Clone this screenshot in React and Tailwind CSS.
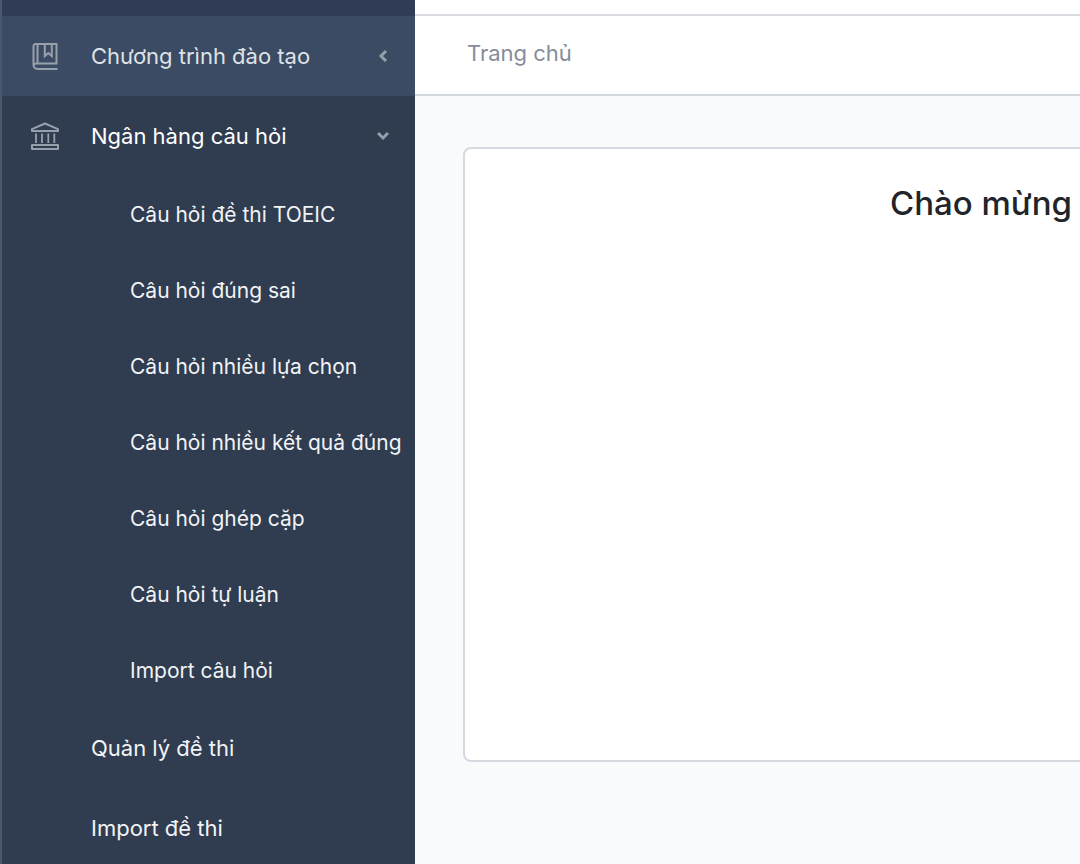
import React, { useState } from "react";

const BookIcon = () => (
  <svg className="w-7 h-7" viewBox="0 0 28 28" fill="none" stroke="currentColor" strokeWidth="2" aria-hidden="true">
    <path d="M26.500 27H6.500a4 4 0 0 1-4-4V4a2 2 0 0 1 2-2h21v19.500H5.500a2.800 2.800 0 0 0-2.800 1.500" />
    <path d="M6.500 2v19.500M13.800 2v12l3.500-3 3.500 3V2" />
  </svg>
);

const BankIcon = () => (
  <svg className="w-7 h-7" viewBox="0 0 28 28" fill="none" stroke="currentColor" strokeWidth="2" strokeLinejoin="round" aria-hidden="true">
    <path d="M1 9V7.200L14 1.500l13 5.700V9z" />
    <path d="M5 11.500v9.500M11 11.500v9.500M17.300 11.500v9.500M23.300 11.500v9.500" strokeWidth="1.8" />
    <path d="M1 23h26v4H1z" />
  </svg>
);

const Arrow = ({ open }) => (
  <svg
    className={`w-3 h-3 text-[#969eaa] ${open ? "" : "rotate-90"}`}
    viewBox="0 0 12 12"
    fill="none"
    stroke="currentColor"
    strokeWidth="3"
    aria-hidden="true"
  >
    <path d="M1 3l5 5 5-5" />
  </svg>
);

const menu = [
  { id: "program", label: "Chương trình đào tạo", icon: BookIcon, children: [] },
  {
    id: "questions",
    label: "Ngân hàng câu hỏi",
    icon: BankIcon,
    children: [
      "Câu hỏi đề thi TOEIC",
      "Câu hỏi đúng sai",
      "Câu hỏi nhiều lựa chọn",
      "Câu hỏi nhiều kết quả đúng",
      "Câu hỏi ghép cặp",
      "Câu hỏi tự luận",
      "Import câu hỏi",
    ],
  },
];

const links = ["Quản lý đề thi", "Import đề thi"];

function Sidebar() {
  const [openId, setOpenId] = useState("questions");

  return (
    <nav className="w-[415px] shrink-0 bg-[#303c50] border-l-2 border-[#4b586a] text-[22px] whitespace-nowrap">
      <div className="h-4 bg-[#303c56]" />
      {menu.map(({ id, label, icon: Icon, children }) => {
        const open = openId === id;
        return (
          <div key={id}>
            <button
              type="button"
              aria-expanded={open}
              onClick={() => setOpenId(open ? null : id)}
              className={`w-full h-20 flex items-center pl-[29px] pr-[26px] cursor-pointer ${open ? "text-white" : "bg-[#3c4b64] text-[#dfe2e6]"}`}
            >
              <span className="text-[#98a0ab]">
                <Icon />
              </span>
              <span className="flex-1 ml-8 text-left">{label}</span>
              <Arrow open={open} />
            </button>
            {open && (
              <ul className="text-[21px]">
                {children.map((item) => (
                  <li key={item}>
                    <a href="#" className="h-[76px] flex items-center pt-0.5 pl-32 text-[#f1f3f5] hover:text-white">
                      {item}
                    </a>
                  </li>
                ))}
              </ul>
            )}
          </div>
        );
      })}
      {links.map((item) => (
        <a key={item} href="#" className="h-20 flex items-center pl-[89px] text-[#f1f3f5] hover:text-white">
          {item}
        </a>
      ))}
    </nav>
  );
}

function App() {
  return (
    <div className="h-screen overflow-hidden flex bg-[#f9fafc] font-['Inter','Noto_Sans',sans-serif]">
      <Sidebar />
      <div className="flex-1 min-w-0">
        <div className="h-4 bg-white border-b-2 border-[#d8dbe0]" />
        <header className="h-20 flex items-center pl-[52px] pb-1 bg-white border-b-2 border-[#d3d7de]">
          <a href="#" className="text-[22px] text-[#858d9a]">
            Trang chủ
          </a>
        </header>
        <main className="pt-[51px] pl-12">
          <section className="min-h-[615px] pt-8 pr-2 bg-white border-2 border-r-0 border-[#d5d9e0] rounded-l-lg">
            <h1 className="text-[33px] leading-[44px] font-medium text-right text-[#212529]">Chào mừng</h1>
          </section>
        </main>
      </div>
    </div>
  );
}

export default App;
